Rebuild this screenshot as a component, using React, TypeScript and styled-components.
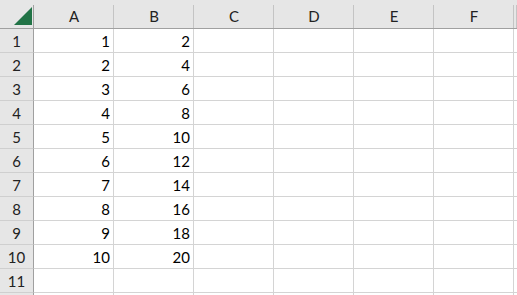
import React from "react";
import styled, { createGlobalStyle } from "styled-components";

const Global = createGlobalStyle`
  html, body { margin: 0; padding: 0; background: #ffffff; overflow: hidden; }
  body { font-family: Lato, "Open Sans", "Liberation Sans", sans-serif; }
`;

const Sheet = styled.div`
  display: grid;
  grid-template-columns: 34px repeat(6, 80px) 1fr;
  grid-auto-rows: 24px;
  grid-template-rows: 29px;
  width: 517px;
  height: 295px;
  overflow: hidden;
  color: #000;
`;

const headerBg = `
  background-color: #e6e6e6;
  background-image: linear-gradient(#c4c4c4, #c4c4c4);
  background-repeat: no-repeat;
  background-position: right bottom;
  background-size: 1px calc(100% - 5px);
`;

const Corner = styled.div`
  ${headerBg}
  background-image: linear-gradient(#a0a0a0, #a0a0a0);
  border-bottom: 1px solid #a0a0a0;
  box-sizing: border-box;
  display: flex;
  align-items: flex-end;
  justify-content: flex-end;
  padding: 0 2px 3px 0;
`;

const ColHead = styled.div`
  ${headerBg}
  border-bottom: 1px solid #a0a0a0;
  box-sizing: border-box;
  display: flex;
  align-items: center;
  justify-content: center;
  font-size: 15px;
  padding-top: 4px;
  color: #222;
`;

const RowHead = styled.div`
  background: #e6e6e6;
  border-right: 1px solid #a0a0a0;
  border-bottom: 1px solid #cfcfcf;
  box-sizing: border-box;
  display: flex;
  align-items: center;
  justify-content: center;
  font-size: 15px;
  padding-top: 1px;
  color: #222;
`;

const Cell = styled.div<{ $last?: boolean }>`
  border-right: ${(p) => (p.$last ? "none" : "1px solid #d4d4d4")};
  border-bottom: 1px solid #d4d4d4;
  box-sizing: border-box;
  display: flex;
  align-items: center;
  justify-content: flex-end;
  padding: 1px 3px 0 0;
  font-size: 15px;
  background: #fff;
`;

const cols = ["A", "B", "C", "D", "E", "F", ""];
const rows = Array.from({ length: 12 }, (_, i) => i + 1);

export default function App() {
  return (
    <>
      <Global />
      <Sheet>
        <Corner>
          <svg width="18" height="18" viewBox="0 0 18 18">
            <polygon points="0,18 18,0 18,18" fill="#217346" />
          </svg>
        </Corner>
        {cols.map((c, i) => (
          <ColHead key={i}>{c}</ColHead>
        ))}
        {rows.map((r) => (
          <React.Fragment key={r}>
            <RowHead>{r <= 11 ? r : ""}</RowHead>
            {cols.map((c, ci) => (
              <Cell key={ci} $last={ci === cols.length - 1}>
                {r <= 10 && ci === 0 ? r : r <= 10 && ci === 1 ? r * 2 : ""}
              </Cell>
            ))}
          </React.Fragment>
        ))}
      </Sheet>
    </>
  );
}
